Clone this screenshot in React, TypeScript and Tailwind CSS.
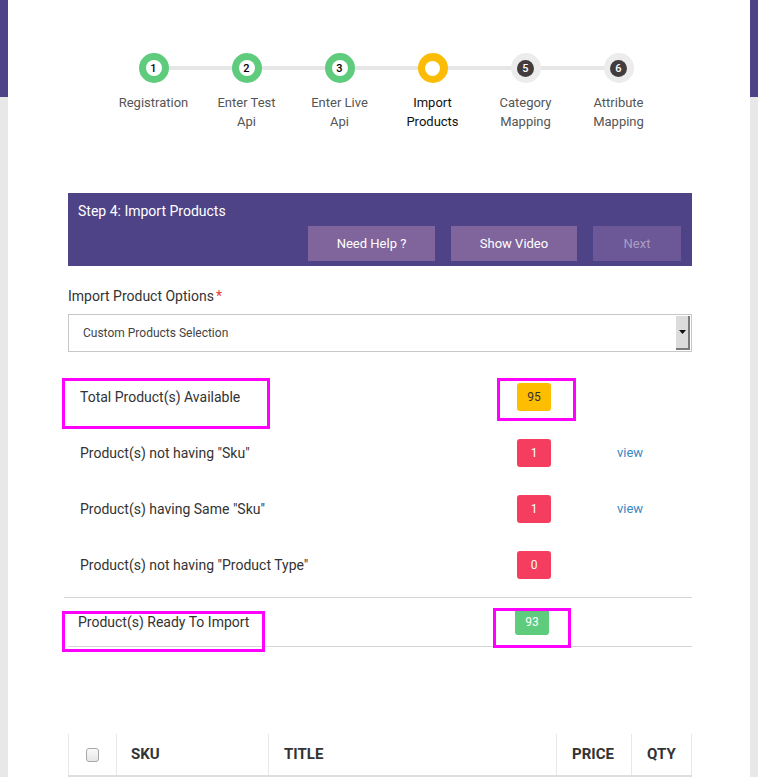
import React from 'react';

const steps = [
  { n: '1', label: ['Registration'], state: 'done' },
  { n: '2', label: ['Enter Test', 'Api'], state: 'done' },
  { n: '3', label: ['Enter Live', 'Api'], state: 'done' },
  { n: '4', label: ['Import', 'Products'], state: 'active' },
  { n: '5', label: ['Category', 'Mapping'], state: 'todo' },
  { n: '6', label: ['Attribute', 'Mapping'], state: 'todo' },
];

const rows = [
  { label: 'Product(s) not having "Sku"', value: '1', view: true },
  { label: 'Product(s) having Same "Sku"', value: '1', view: true },
  { label: 'Product(s) not having "Product Type"', value: '0', view: false },
];

const StepDot: React.FC<{ n: string; state: string }> = ({ n, state }) => {
  if (state === 'done') {
    return (
      <div className="w-[30px] h-[30px] rounded-full bg-[#5ecb7d] flex items-center justify-center">
        <div className="w-[16px] h-[16px] rounded-full bg-white flex items-center justify-center text-[11px] font-medium text-black leading-none">{n}</div>
      </div>
    );
  }
  if (state === 'active') {
    return (
      <div className="w-[30px] h-[30px] rounded-full bg-[#fbbc05] flex items-center justify-center">
        <div className="w-[15px] h-[15px] rounded-full bg-white" />
      </div>
    );
  }
  return (
    <div className="w-[30px] h-[30px] rounded-full bg-[#ececec] flex items-center justify-center">
      <div className="w-[17px] h-[17px] rounded-full bg-[#433c3c] flex items-center justify-center text-[11px] font-medium text-white leading-none">{n}</div>
    </div>
  );
};

export default function App() {
  return (
    <div className="min-h-screen bg-[linear-gradient(to_bottom,#4e4387_97px,#e8e8e8_97px)] px-2 font-['Roboto',sans-serif]">
      <div className="bg-white min-h-[777px] pl-[60px] pr-[58px] pt-[53px]">
        {/* stepper */}
        <div className="relative w-[558px] ml-[39px] flex">
          <div className="absolute left-[46px] right-[46px] top-[13px] h-[4px] bg-[#e6e6e6]" />
          {steps.map((s) => (
            <div key={s.n} className="relative w-[93px] flex flex-col items-center">
              <StepDot n={s.n} state={s.state} />
              <div className={`mt-[10px] text-[13px] leading-[19px] text-center ${s.state === 'active' ? 'text-[#111]' : 'text-[#555]'}`}>
                {s.label.map((l) => (
                  <div key={l}>{l}</div>
                ))}
              </div>
            </div>
          ))}
        </div>

        {/* panel */}
        <div className="mt-[62px] bg-[#4e4387] pl-[10px] pr-[11px] pt-[8px] pb-[5px]">
          <div className="text-white text-[14px] leading-[20px]">Step 4: Import Products</div>
          <div className="flex justify-end gap-[16px] mt-[5px]">
            <button className="w-[127px] h-[35px] bg-[#7f659c] text-white text-[13px]">Need Help ?</button>
            <button className="w-[126px] h-[35px] bg-[#7f659c] text-white text-[13px]">Show Video</button>
            <button className="w-[88px] h-[35px] bg-[#6c5896] text-[#a99ec6] text-[13px]">Next</button>
          </div>
        </div>

        {/* select */}
        <div className="mt-[21px] text-[14px] leading-[18px] text-[#333]">
          Import Product Options<span className="text-[#e53935] ml-[2px]">*</span>
        </div>
        <div className="mt-[9px] h-[38px] border border-[#c8c8c8] flex items-center justify-between pl-[14px] pr-[1px]">
          <span className="text-[12px] text-[#444]">Custom Products Selection</span>
          <div className="w-[14px] h-[34px] bg-[#dcdcdc] border-r-2 border-b-2 border-[#7a7a7a] flex items-center justify-center">
            <svg width="7" height="4" viewBox="0 0 7 4"><path d="M0 0h7L3.5 4z" fill="#111" /></svg>
          </div>
        </div>

        {/* counts */}
        <div className="mt-[17px]">
          <div className="relative h-[56px] flex items-center pl-[12px]">
            <div className="w-[437px] text-[14px] text-[#333]">Total Product(s) Available</div>
            <div className="w-[34px] h-[28px] rounded-[3px] bg-[#fdbd00] flex items-center justify-center text-[12px] text-[#333]">95</div>
            <div className="absolute left-[-6px] top-[9px] w-[208px] h-[51px] border-[3px] border-[#ff00ff]" />
            <div className="absolute left-[429px] top-[9px] w-[79px] h-[43px] border-[3px] border-[#ff00ff]" />
          </div>
          {rows.map((r) => (
            <div key={r.label} className="h-[56px] flex items-center pl-[12px]">
              <div className="w-[437px] text-[14px] text-[#333]">{r.label}</div>
              <div className="w-[34px] h-[28px] rounded-[3px] bg-[#f53e5f] flex items-center justify-center text-[12px] text-white">{r.value}</div>
              {r.view && <a className="ml-[66px] text-[13px] text-[#3a86c5]">view</a>}
            </div>
          ))}
          <div className="mt-[4px] ml-[-4px] border-t border-[#d6d6d6]" />
          <div className="relative h-[49px] flex items-center pl-[10px] border-b border-[#d6d6d6]">
            <div className="w-[437px] text-[14px] text-[#333]">Product(s) Ready To Import</div>
            <div className="w-[34px] h-[26px] rounded-[3px] bg-[#5ecb7d] flex items-center justify-center text-[12px] text-white">93</div>
            <div className="absolute left-[-6px] top-[13px] w-[203px] h-[41px] border-[3px] border-[#ff00ff]" />
            <div className="absolute left-[425px] top-[10px] w-[78px] h-[40px] border-[3px] border-[#ff00ff]" />
          </div>
        </div>

        {/* table */}
        <table className="mt-[87px] w-full border-collapse">
          <thead>
            <tr className="h-[42px] border-b-2 border-[#dedede] text-left text-[15px] font-bold text-[#333]">
              <th className="w-[48px] border-x border-[#e8e8e8] pl-[17px]">
                <div className="w-[13px] h-[14px] rounded-[3px] border border-[#a8a8a8] bg-[linear-gradient(#fafafa,#e6e6e6)]" />
              </th>
              <th className="w-[152px] border-x border-[#e8e8e8] pl-[14px]">SKU</th>
              <th className="border-x border-[#e8e8e8] pl-[15px]">TITLE</th>
              <th className="w-[75px] border-x border-[#e8e8e8] pl-[15px]">PRICE</th>
              <th className="w-[60px] border-x border-[#e8e8e8] pl-[15px]">QTY</th>
            </tr>
          </thead>
        </table>
      </div>
    </div>
  );
}
